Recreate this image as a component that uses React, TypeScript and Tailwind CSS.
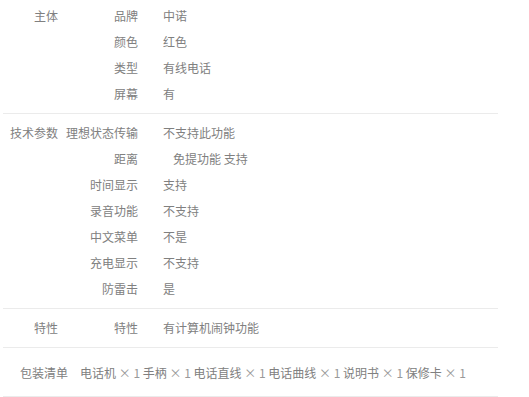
import React from "react";

type Row = { label: string; value: string; indent?: boolean };
type Group = { title: string; rows: Row[]; pad: string };

const groups: Group[] = [
  {
    title: "主体",
    pad: "pt-[3px] pb-[6px]",
    rows: [
      { label: "品牌", value: "中诺" },
      { label: "颜色", value: "红色" },
      { label: "类型", value: "有线电话" },
      { label: "屏幕", value: "有" },
    ],
  },
  {
    title: "技术参数",
    pad: "pt-[6px] pb-[6px]",
    rows: [
      { label: "理想状态传输", value: "不支持此功能" },
      { label: "距离", value: "免提功能 支持", indent: true },
      { label: "时间显示", value: "支持" },
      { label: "录音功能", value: "不支持" },
      { label: "中文菜单", value: "不是" },
      { label: "充电显示", value: "不支持" },
      { label: "防雷击", value: "是" },
    ],
  },
  {
    title: "特性",
    pad: "pt-[6px] pb-[6px]",
    rows: [{ label: "特性", value: "有计算机闹钟功能" }],
  },
];

const pack = ["电话机", "手柄", "电话直线", "电话曲线", "说明书", "保修卡"];

export default function App() {
  return (
    <div
      className="w-[529px] h-[397px] bg-white text-[12px] text-[#808080]"
      style={{ fontFamily: '"Microsoft YaHei", "Noto Sans CJK SC", sans-serif' }}
    >
      <div className="ml-[3px] w-[495px]">
        {groups.map((g) => (
          <div key={g.title} className={`flex border-b border-[#ebebeb] ${g.pad}`}>
            <div className="w-[55px] shrink-0 text-right leading-[26px]">{g.title}</div>
            <div className="flex flex-col">
              {g.rows.map((r, i) => (
                <div key={i} className="flex h-[26px] items-center leading-[26px]">
                  <div className="w-[80px] shrink-0 text-right">{r.label}</div>
                  <div className={r.indent ? "ml-[35px]" : "ml-[25px]"}>{r.value}</div>
                </div>
              ))}
            </div>
          </div>
        ))}
        <div className="flex border-b border-[#ebebeb] pt-[12px] pb-[10px] pl-[17px]">
          <div className="leading-[26px]">包装清单</div>
          <div className="ml-[12px] leading-[26px] whitespace-nowrap">
            {pack.map((p, i) => (
              <span key={p}>
                {p}
                <span className="text-[#999]">&nbsp;×&nbsp;1</span>
                {i < pack.length - 1 ? " " : ""}
              </span>
            ))}
          </div>
        </div>
      </div>
    </div>
  );
}
